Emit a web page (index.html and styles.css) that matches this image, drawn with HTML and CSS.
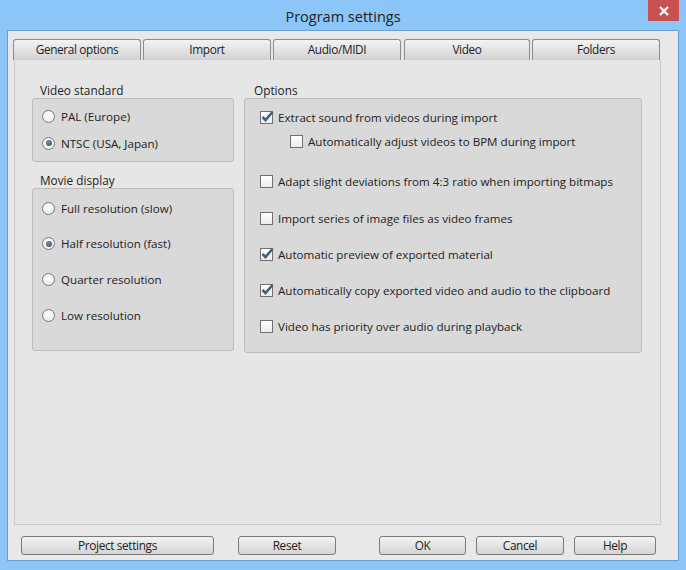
FILE: index.html
```html
<!DOCTYPE html>
<html>
<head>
<meta charset="utf-8">
<link rel="stylesheet" href="styles.css">
</head>
<body>
<div class="window">
  <div class="titlebar">
    <span class="title">Program settings</span>
    <div class="close"><svg width="12" height="10" viewBox="0 0 12 10"><path d="M2 1 L10 9 M10 1 L2 9" stroke="#fff" stroke-width="2.2"/></svg></div>
  </div>
  <div class="client">
    <div class="tabs">
      <div class="tab">General options</div>
      <div class="tab">Import</div>
      <div class="tab">Audio/MIDI</div>
      <div class="tab active">Video</div>
      <div class="tab">Folders</div>
    </div>
    <div class="panel">
      <div class="col-left">
        <div class="glabel">Video standard</div>
        <div class="gbox std">
          <div class="row"><span class="radio"></span>PAL (Europe)</div>
          <div class="row"><span class="radio on"></span>NTSC (USA, Japan)</div>
        </div>
        <div class="glabel second">Movie display</div>
        <div class="gbox movie">
          <div class="row"><span class="radio"></span>Full resolution (slow)</div>
          <div class="row"><span class="radio on"></span>Half resolution (fast)</div>
          <div class="row"><span class="radio"></span>Quarter resolution</div>
          <div class="row"><span class="radio"></span>Low resolution</div>
        </div>
      </div>
      <div class="col-right">
        <div class="glabel opt">Options</div>
        <div class="gbox options">
          <div class="row"><span class="check on"><svg width="14" height="14" viewBox="0 0 14 14"><path d="M2.5 7 L5.5 10 L12.5 2" fill="none" stroke="#3d5f80" stroke-width="2.6"/></svg></span>Extract sound from videos during import</div>
          <div class="row sub"><span class="check"></span>Automatically adjust videos to BPM during import</div>
          <div class="row r3"><span class="check"></span>Adapt slight deviations from 4:3 ratio when importing bitmaps</div>
          <div class="row r4"><span class="check"></span>Import series of image files as video frames</div>
          <div class="row r5"><span class="check on"><svg width="14" height="14" viewBox="0 0 14 14"><path d="M2.5 7 L5.5 10 L12.5 2" fill="none" stroke="#3d5f80" stroke-width="2.6"/></svg></span>Automatic preview of exported material</div>
          <div class="row r5"><span class="check on"><svg width="14" height="14" viewBox="0 0 14 14"><path d="M2.5 7 L5.5 10 L12.5 2" fill="none" stroke="#3d5f80" stroke-width="2.6"/></svg></span>Automatically copy exported video and audio to the clipboard</div>
          <div class="row r5"><span class="check"></span>Video has priority over audio during playback</div>
        </div>
      </div>
    </div>
    <div class="buttons">
      <div class="btn b-proj">Project settings</div>
      <div class="btn b-reset">Reset</div>
      <div class="btn b-ok">OK</div>
      <div class="btn b-cancel">Cancel</div>
      <div class="btn b-help">Help</div>
    </div>
  </div>
</div>
</body>
</html>
```
FILE: styles.css
```css
html, body { margin: 0; padding: 0; }
body { width: 686px; height: 570px; overflow: hidden; font-family: "Open Sans", "Noto Sans", sans-serif; }
.window {
  width: 686px; height: 570px; box-sizing: border-box;
  background: #8cc5f8;
  padding: 0 7px 9px 7px;
  display: flex; flex-direction: column;
  position: relative;
}
.titlebar {
  height: 30px; display: flex; align-items: center; justify-content: center;
}
.title { font-family: "Open Sans", sans-serif; font-size: 14.5px; color: #222; margin-top: 2px; }
.close {
  position: absolute; top: 0; right: 7px; width: 31px; height: 21px;
  background: #c75050; display: flex; align-items: center; justify-content: center;
}
.client {
  flex: 1; background: #e8e8e8; border: 1px solid #6a9fd0;
  display: flex; flex-direction: column;
  padding: 8px 16px 0 5px;
}
.tabs { display: grid; grid-template-columns: 128px 128px 128px 127px 128px; column-gap: 2px; width: 649px; }
.tabs .tab:nth-child(4) { margin-left: 1px; }
.tab {
  height: 20px; border: 1px solid #8c8c8c; border-bottom: none; border-radius: 3px 3px 0 0;
  background: linear-gradient(#f3f3f3, #d2d2d2);
  font-size: 11.8px; letter-spacing: -0.35px; color: #222; text-align: center; line-height: 19px;
}
.panel {
  margin-left: 1px; width: 647px; height: 465px; box-sizing: border-box;
  border: 1px solid #cbcbcb; border-top: none; background: #e6e6e6;
  display: flex; padding: 0 0 0 17px;
}
.col-left { width: 202px; }
.col-right { width: 398px; margin-left: 10px; }
.glabel { font-size: 11.8px; color: #222; height: 16px; line-height: 16px; margin-top: 22px; padding-left: 8px; }
.glabel.second { margin-top: 10px; }
.glabel.opt { margin-top: 23px; height: 15px; line-height: 15px; padding-left: 10px; }
.gbox {
  background: #d9d9d9; border: 1px solid #bcbcbc; border-radius: 3px; box-sizing: border-box;
}
.row { display: flex; align-items: center; height: 20px; font-size: 11.6px; color: #222; white-space: nowrap; }
.std { height: 64px; padding: 7px 0 0 9px; }
.std .row + .row { margin-top: 7px; }
.movie { height: 163px; padding: 9px 0 0 9px; }
.movie .row + .row { margin-top: 15.7px; }
.radio {
  width: 11px; height: 11px; border: 1px solid #7a7a7a; border-radius: 50%;
  background: radial-gradient(circle at 50% 40%, #fff, #e6e6e6);
  margin-right: 6px; position: relative; flex: none;
}
.radio.on::after {
  content: ""; position: absolute; left: 2.5px; top: 2.5px; width: 6px; height: 6px; border-radius: 50%;
  background: radial-gradient(circle at 40% 35%, #7a8ea4, #34465a);
}
.options { height: 255px; padding: 8px 0 0 15px; }
.check {
  width: 11px; height: 11px; border: 1px solid #707070; background: linear-gradient(#fff, #ececec);
  margin-right: 5px; position: relative; flex: none;
}
.check svg { position: absolute; left: -1px; top: -2px; }
.row.sub { margin-top: 4px; margin-left: 30px; }
.row.r3 { margin-top: 20px; }
.row.r4 { margin-top: 17px; }
.row.r5 { margin-top: 16px; }
.buttons { position: relative; height: 20px; margin-top: 11px; display: flex; }
.btn {
  box-sizing: border-box; height: 19px;
  border: 1px solid #7a7a7a; border-radius: 3px; background: linear-gradient(#f3f3f3, #d4d4d4);
  font-size: 11.8px; letter-spacing: -0.35px; color: #222; text-align: center; line-height: 17px;
}
.b-proj { width: 193px; margin-left: 8px; }
.b-reset { width: 98px; margin-left: 24px; }
.b-ok { width: 87px; margin-left: 43px; }
.b-cancel { width: 88px; margin-left: 10px; }
.b-help { width: 82px; margin-left: 10px; }
```
